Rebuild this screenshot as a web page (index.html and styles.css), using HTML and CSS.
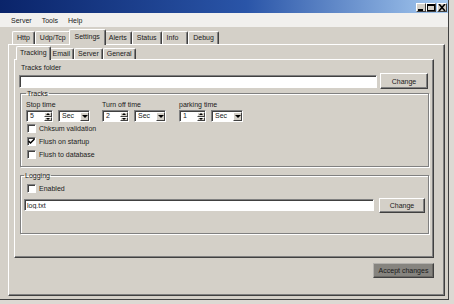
FILE: index.html
```html
<!DOCTYPE html>
<html lang="en">
<head>
    <meta charset="UTF-8">
    <meta name="viewport" content="width=device-width, initial-scale=1.0">
    <title>Settings</title>
    <link rel="stylesheet" href="styles.css">
</head>
<body>

<div class="window">

    <div class="titlebar">
        <div class="winbtns">
            <span class="winbtn">
                <svg width="8" height="7" viewBox="0 0 8 7"><rect x="1" y="5" width="5" height="2" fill="#000"/></svg>
            </span>
            <span class="winbtn">
                <svg width="8" height="7" viewBox="0 0 8 7"><rect x="0.5" y="0.5" width="7" height="6" fill="none" stroke="#000"/><rect x="0" y="0" width="8" height="2" fill="#000"/></svg>
            </span>
            <span class="winbtn close">
                <svg width="8" height="7" viewBox="0 0 8 7"><path d="M1 0 L7 7 M7 0 L1 7" stroke="#000" stroke-width="1.6"/></svg>
            </span>
        </div>
    </div>

    <div class="menubar">
        <span>Server</span>
        <span>Tools</span>
        <span>Help</span>
    </div>

    <div class="client">

        <div class="tabs">
            <span class="tab">Http</span>
            <span class="tab">Udp/Tcp</span>
            <span class="tab active">Settings</span>
            <span class="tab">Alerts</span>
            <span class="tab">Status</span>
            <span class="tab wide">Info</span>
            <span class="tab">Debug</span>
        </div>

        <div class="panel outer">

            <div class="tabs small">
                <span class="tab active">Tracking</span>
                <span class="tab">Email</span>
                <span class="tab">Server</span>
                <span class="tab">General</span>
            </div>

            <div class="panel inner">

                <div class="caption folder">Tracks folder</div>
                <div class="pathrow">
                    <input class="field" type="text" value="">
                    <button class="btn">Change</button>
                </div>

                <fieldset class="group tracks">
                    <legend>Tracks</legend>

                    <div class="timers">
                        <div class="timer">
                            <div class="caption">Stop time</div>
                            <div class="controls">
                                <div class="spin"><span>5</span><span class="arrows"><i class="up"></i><i class="down"></i></span></div>
                                <div class="combo"><span>Sec</span><span class="drop"><i class="down"></i></span></div>
                            </div>
                        </div>
                        <div class="timer">
                            <div class="caption">Turn off time</div>
                            <div class="controls">
                                <div class="spin"><span>2</span><span class="arrows"><i class="up"></i><i class="down"></i></span></div>
                                <div class="combo"><span>Sec</span><span class="drop"><i class="down"></i></span></div>
                            </div>
                        </div>
                        <div class="timer">
                            <div class="caption">parking time</div>
                            <div class="controls">
                                <div class="spin"><span>1</span><span class="arrows"><i class="up"></i><i class="down"></i></span></div>
                                <div class="combo"><span>Sec</span><span class="drop"><i class="down"></i></span></div>
                            </div>
                        </div>
                    </div>

                    <div class="check"><span class="box"></span>Chksum validation</div>
                    <div class="check"><span class="box">
                        <svg width="7" height="7" viewBox="0 0 7 7"><path d="M0.5 3 L2.5 5 L6.5 1" fill="none" stroke="#000" stroke-width="1.5"/></svg>
                    </span>Flush on startup</div>
                    <div class="check"><span class="box"></span>Flush to database</div>
                </fieldset>

                <fieldset class="group logging">
                    <legend>Logging</legend>
                    <div class="check"><span class="box"></span>Enabled</div>
                    <div class="pathrow logrow">
                        <input class="field" type="text" value="log.txt">
                        <button class="btn">Change</button>
                    </div>
                </fieldset>

            </div>

            <div class="footer">
                <button class="btn accept">Accept changes</button>
            </div>

        </div>
    </div>
</div>

</body>
</html>
```

FILE: styles.css
```css
* {
    box-sizing: border-box;
}

body {
    margin: 0;
    background-color: #dcd9d3;
    font-family: "Liberation Sans", Arial, sans-serif;
    font-size: 7px;
    color: #1a1a1a;
}

.window {
    width: 449px;
    height: 300px;
    display: flex;
    flex-direction: column;
    background-color: #d4d0c8;
    border-right: 1px solid #404040;
    border-bottom: 1px solid #404040;
}

/* title bar */

.titlebar {
    height: 13px;
    background: linear-gradient(to right, #0a246a 0%, #2a55a8 55%, #a6caf0 100%);
    display: flex;
    justify-content: flex-end;
    padding: 3px 1px 0 0;
}

.winbtns {
    display: flex;
}

.winbtn {
    width: 10px;
    height: 9px;
    background-color: #d4d0c8;
    border-top: 1px solid #fff;
    border-left: 1px solid #fff;
    border-right: 1px solid #404040;
    border-bottom: 1px solid #404040;
    display: flex;
    align-items: center;
    justify-content: center;
}

.winbtn.close {
    margin-left: 1px;
}

/* menu */

.menubar {
    height: 14px;
    background-color: #f1f0ee;
    display: flex;
    align-items: center;
    padding-left: 6px;
}

.menubar span {
    padding: 0 5px;
}

/* tabs */

.client {
    flex: 1;
    display: flex;
    flex-direction: column;
    padding: 2px 0 0 8px;
}

.tabs {
    display: flex;
    align-items: flex-end;
    height: 15px;
    padding-left: 4px;
}

.tab {
    height: 13px;
    line-height: 12px;
    padding: 0 4px;
    min-width: 22px;
    text-align: center;
    border-top: 1px solid #fff;
    border-left: 1px solid #fff;
    border-right: 1px solid #404040;
    border-radius: 2px 2px 0 0;
    box-shadow: inset -1px 0 #808080;
}

.tab.wide {
    padding-right: 9px;
}

.tab.active {
    height: 16px;
    line-height: 14px;
    margin: 0 -2px -1px -2px;
    padding: 0 5px;
    position: relative;
    z-index: 1;
    background-color: #d4d0c8;
}

.tabs.small {
    height: 13px;
}

.tabs.small .tab {
    height: 11px;
    line-height: 10px;
    padding: 0 3px;
}

.tabs.small .tab.active {
    height: 14px;
    line-height: 12px;
    padding: 0 3px;
}

/* panels */

.panel {
    border-top: 1px solid #fff;
    border-left: 1px solid #fff;
    border-right: 1px solid #404040;
    border-bottom: 1px solid #404040;
    box-shadow: inset -1px -1px #808080;
}

.panel.outer {
    width: 437px;
    height: 252px;
    padding: 1px 0 0 5px;
}

.panel.inner {
    width: 420px;
    height: 199px;
    padding: 3px 4px 0 4px;
    display: flex;
    flex-direction: column;
}

.caption {
    line-height: 9px;
    white-space: nowrap;
}

.folder {
    padding-left: 2px;
}

.pathrow {
    display: flex;
    align-items: center;
    gap: 3px;
    height: 16px;
    margin-top: 1px;
}

.field {
    flex: 1;
    height: 13px;
    min-width: 0;
    padding: 0 2px;
    font-family: "Liberation Sans", Arial, sans-serif;
    font-size: 7px;
    color: #1a1a1a;
    background-color: #fff;
    border: 1px solid;
    border-color: #808080 #fff #fff #808080;
    box-shadow: inset 1px 1px #404040;
    outline: none;
}

.btn {
    width: 48px;
    height: 16px;
    margin-right: 1px;
    padding: 0;
    font-family: "Liberation Sans", Arial, sans-serif;
    font-size: 7px;
    color: #1a1a1a;
    background-color: #d4d0c8;
    border: 1px solid;
    border-color: #fff #404040 #404040 #fff;
    box-shadow: inset -1px -1px #808080;
}

/* group boxes */

.group {
    margin: 0 0 0 1px;
    border: 1px solid #808080;
    box-shadow: inset 1px 1px #fff, 1px 1px #fff;
    min-width: 0;
}

.group legend {
    padding: 0 1px;
    line-height: 9px;
}

.tracks {
    height: 78px;
    padding: 2px 4px 0 5px;
}

.logging {
    height: 63px;
    margin-top: 4px;
    padding: 2px 3px 0 3px;
}

.timers {
    display: grid;
    grid-template-columns: 76px 77px auto;
}

.controls {
    display: flex;
    gap: 5px;
    margin-top: 1px;
}

.spin,
.combo {
    height: 12px;
    display: flex;
    align-items: stretch;
    background-color: #fff;
    border: 1px solid;
    border-color: #808080 #fff #fff #808080;
    box-shadow: inset 1px 1px #404040;
}

.spin {
    width: 27px;
}

.combo {
    width: 32px;
}

.spin span:first-child,
.combo span:first-child {
    flex: 1;
    padding-left: 3px;
    line-height: 10px;
}

.arrows {
    width: 8px;
    display: flex;
    flex-direction: column;
    margin: 1px 0 0 0;
}

.arrows i {
    flex: 1;
    display: flex;
    align-items: center;
    justify-content: center;
    background-color: #d4d0c8;
    border-top: 1px solid #fff;
    border-left: 1px solid #fff;
    border-right: 1px solid #404040;
    border-bottom: 1px solid #404040;
}

.drop {
    width: 9px;
    margin-top: 1px;
    display: flex;
    align-items: center;
    justify-content: center;
    background-color: #d4d0c8;
    border-top: 1px solid #fff;
    border-left: 1px solid #fff;
    border-right: 1px solid #404040;
    border-bottom: 1px solid #404040;
}

i.up::before,
i.down::before {
    content: "";
    border-left: 2px solid transparent;
    border-right: 2px solid transparent;
}

i.up::before {
    border-bottom: 2px solid #000;
}

i.down::before {
    border-top: 2px solid #000;
}

.drop i {
    display: flex;
}

.drop i.down::before {
    border-left-width: 3px;
    border-right-width: 3px;
    border-top-width: 3px;
}

/* checkboxes */

.check {
    height: 13px;
    display: flex;
    align-items: center;
    gap: 3px;
    margin-left: 1px;
}

.tracks .check:first-of-type {
    margin-top: 3px;
}

.box {
    width: 9px;
    height: 9px;
    display: flex;
    align-items: center;
    justify-content: center;
    background-color: #fff;
    border: 1px solid;
    border-color: #808080 #fff #fff #808080;
    box-shadow: inset 1px 1px #404040;
}

.logging .check {
    margin-left: 3px;
}

.logrow {
    gap: 5px;
    margin-top: 2px;
}

.logrow .field {
    height: 12px;
}

.logrow .btn {
    width: 46px;
    height: 15px;
    margin-right: 0;
}

/* footer */

.footer {
    width: 420px;
    display: flex;
    justify-content: flex-end;
    margin-top: 5px;
}

.btn.accept {
    width: 61px;
    height: 15px;
    margin-right: 0;
    background-color: #86847f;
    border-color: #b4b2ae #404040 #404040 #b4b2ae;
    box-shadow: inset -1px -1px #6a6864;
}
```
